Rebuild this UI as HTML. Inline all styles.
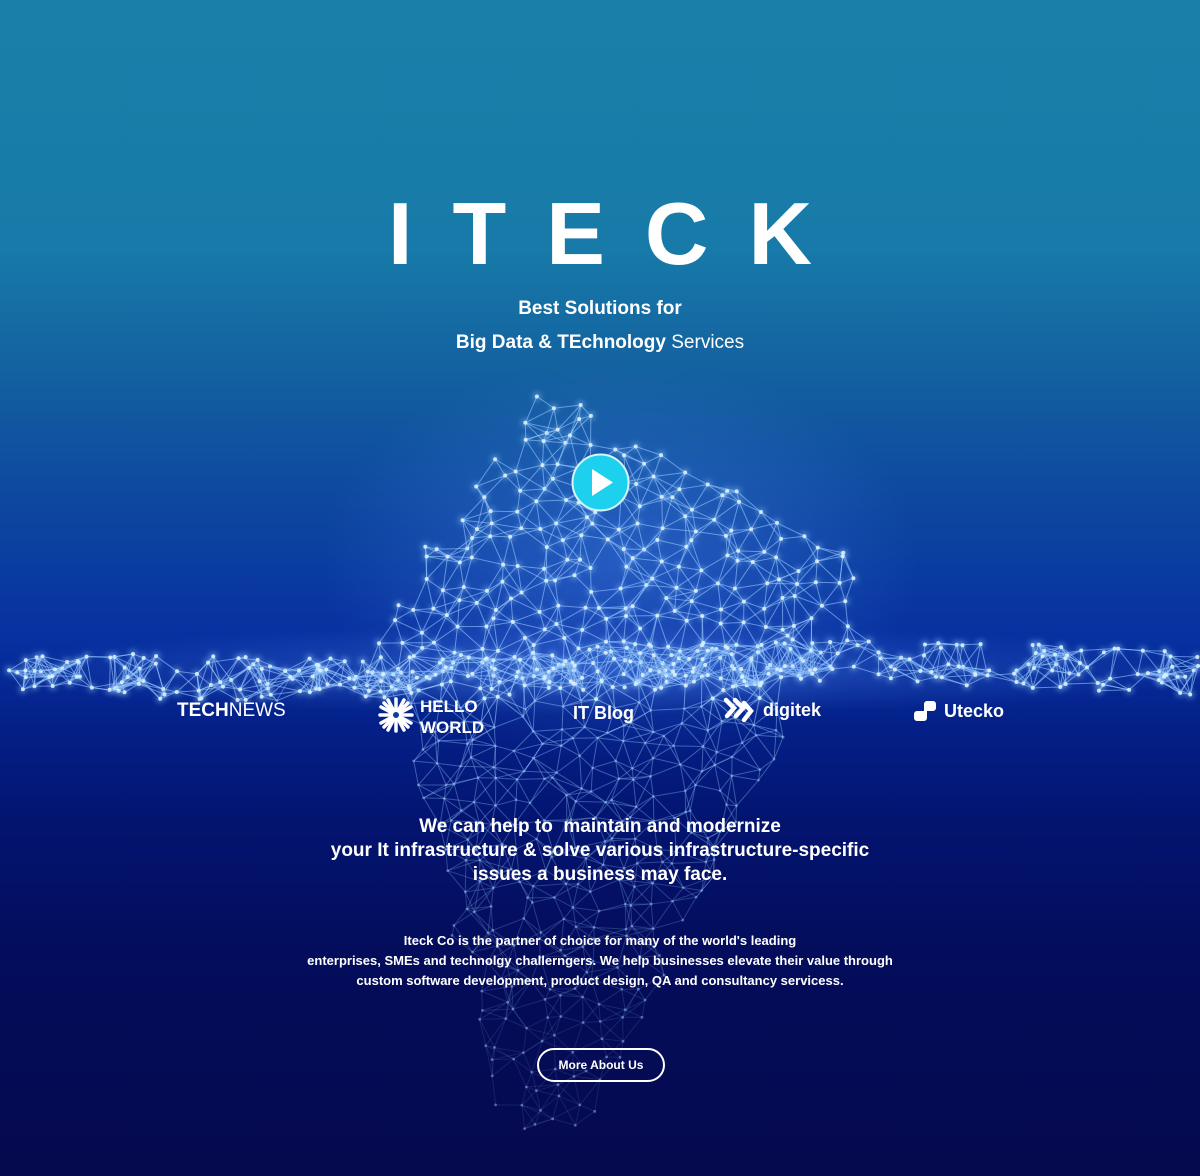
<!DOCTYPE html>
<html><head><meta charset="utf-8"><style>
html,body{margin:0;padding:0}
body{width:1200px;height:1176px;position:relative;overflow:hidden;font-family:"Liberation Sans",Arial,sans-serif;color:#fff;
background:linear-gradient(180deg,#1a80a9 0px,#177aa8 250px,#135f9f 380px,#0c44a0 520px,#0730a0 640px,#04218a 720px,#031470 820px,#040d5c 950px,#050a4e 1176px);}
#net{position:absolute;left:0;top:0}
.t{position:absolute;left:0;width:1200px;text-align:center}
h1{position:absolute;left:0;width:1200px;top:186px;margin:0;text-align:center;font-size:88px;font-weight:bold;letter-spacing:40px;text-indent:40px;line-height:96px}
.logo{position:absolute;font-weight:bold;font-size:19px}
.btn{position:absolute;left:537px;top:1048px;width:124px;height:30px;border:2px solid #fff;border-radius:17px;font-size:12px;font-weight:bold;text-align:center;line-height:30px}
</style></head><body>
<svg id="net" width="1200" height="1176"><defs><filter id="b"><feGaussianBlur stdDeviation="3"/></filter><radialGradient id="gl" cx="0.5" cy="0.5" r="0.5"><stop offset="0" stop-color="rgba(90,150,255,0.35)"/><stop offset="1" stop-color="rgba(90,150,255,0)"/></radialGradient></defs>
<ellipse cx="620" cy="560" rx="300" ry="200" fill="url(#gl)"/><ellipse cx="600" cy="670" rx="620" ry="45" fill="url(#gl)"/></svg>
<h1>ITECK</h1>
<div class="t" style="top:298px;font-size:19px;font-weight:bold">Best Solutions for</div>
<div class="t" style="top:332px;font-size:19px"><b>Big Data &amp; TEchnology</b> Services</div>
<svg style="position:absolute;left:571px;top:453px" width="59" height="59"><circle cx="29.5" cy="29.5" r="28" fill="#1cd0ee" stroke="#d8f4fa" stroke-width="2"/><path d="M21 16 L42 29.5 L21 43Z" fill="#fff"/></svg>
<div class="logo" style="left:177px;top:700px">TECH<span style="font-weight:normal">NEWS</span></div>
<svg style="position:absolute;left:377px;top:696px" width="38" height="38"><g stroke="#fff" stroke-width="3.5" stroke-linecap="round"><line x1="19" y1="3" x2="19" y2="35"/><line x1="3" y1="19" x2="35" y2="19"/><line x1="7" y1="7" x2="31" y2="31"/><line x1="31" y1="7" x2="7" y2="31"/><line x1="11" y1="4" x2="27" y2="34"/><line x1="27" y1="4" x2="11" y2="34"/><line x1="4" y1="11" x2="34" y2="27"/><line x1="34" y1="11" x2="4" y2="27"/></g><circle cx="19" cy="19" r="3" fill="#0b3fa0"/></svg>
<div class="logo" style="left:420px;top:696px;font-size:17px;line-height:21px">HELLO<br>WORLD</div>
<div class="logo" style="left:573px;top:703px;font-size:18px">IT Blog</div>
<svg style="position:absolute;left:723px;top:697px" width="32" height="26"><g fill="none" stroke="#fff" stroke-width="4.5" stroke-linecap="round"><path d="M3 3 L11 11 L4 19"/><path d="M12 3 L20 11 L13 19"/><path d="M21 6 L28 14 L21 23"/></g></svg>
<div class="logo" style="left:763px;top:700px;font-size:18px">digitek</div>
<svg style="position:absolute;left:913px;top:699px" width="24" height="24"><path d="M14 2 h6 a3 3 0 0 1 3 3 v4 a3 3 0 0 1 -3 3 h-6 v7 a3 3 0 0 1 -3 3 h-7 a3 3 0 0 1 -3 -3 v-4 a3 3 0 0 1 3 -3 h7 v-7 a3 3 0 0 1 3 -3z" fill="#fff"/></svg>
<div class="logo" style="left:944px;top:701px;font-size:18px">Utecko</div>
<div class="t" style="top:815px;font-size:19px;font-weight:bold;line-height:24px">We can help to&nbsp; maintain and modernize<br>your It infrastructure &amp; solve various infrastructure-specific<br>issues a business may face.</div>
<div class="t" style="top:931px;font-size:13px;font-weight:bold;line-height:20px">Iteck Co is the partner of choice for many of the world's leading<br>enterprises, SMEs and technolgy challerngers. We help businesses elevate their value through<br>custom software development, product design, QA and consultancy servicess.</div>
<div class="btn">More About Us</div>
<script>
(function(){
var s=document.getElementById('net'),ns='http://www.w3.org/2000/svg',seed=11;
function r(){seed=(seed*16807)%2147483647;return seed/2147483647;}
function lerp(a,b,t){return a+(b-a)*t;}
function inside(x,y){
 if(y<395||y>1130)return false;
 var L,R;
 if(y<640){var t=(y-395)/245;L=lerp(535,378,Math.min(1,t*1.15));R=(y<560)?lerp(570,860,(y-395)/165):860;}
 else{var t=(y-640)/490;L=lerp(378,500,t);R=lerp(860,600,Math.pow(t,0.8));}
 return x>L&&x<R;}
var pts=[];
for(var gy=395;gy<1130;gy+=20)for(var gx=370;gx<870;gx+=20){var x=gx+r()*18,y=gy+r()*18;if(inside(x,y))pts.push([x,y]);}
for(var i=0;i<320;i++){var x=r()*1200,y=648+r()*45+Math.sin(x/180)*8;pts.push([x,y]);}
var g=document.createElementNS(ns,'g');var gb=document.createElementNS(ns,'g');gb.setAttribute('filter','url(#b)');s.appendChild(gb);s.appendChild(g);
for(i=0;i<pts.length;i++){var p=pts[i],c=0;
 for(var j=0;j<pts.length&&c<4;j++){if(j==i)continue;var q=pts[j],d=Math.hypot(p[0]-q[0],p[1]-q[1]);
  if(d<34&&j>i){c++;var l=document.createElementNS(ns,'line');l.setAttribute('x1',p[0]);l.setAttribute('y1',p[1]);l.setAttribute('x2',q[0]);l.setAttribute('y2',q[1]);
  var op=p[1]<700?0.6:Math.max(0.12,0.45-(p[1]-700)/1000);l.setAttribute('stroke','rgba(150,200,255,'+op+')');l.setAttribute('stroke-width','1');g.appendChild(l);}}
 var bright=p[1]<700;
 var ci=document.createElementNS(ns,'circle');ci.setAttribute('cx',p[0]);ci.setAttribute('cy',p[1]);ci.setAttribute('r',bright?2:1.4);ci.setAttribute('fill',bright?'rgba(220,240,255,0.9)':'rgba(160,200,255,0.45)');g.appendChild(ci);
 if(bright){var c2=document.createElementNS(ns,'circle');c2.setAttribute('cx',p[0]);c2.setAttribute('cy',p[1]);c2.setAttribute('r',4);c2.setAttribute('fill','rgba(150,210,255,0.5)');gb.appendChild(c2);}}
})();
</script>
</body></html>
